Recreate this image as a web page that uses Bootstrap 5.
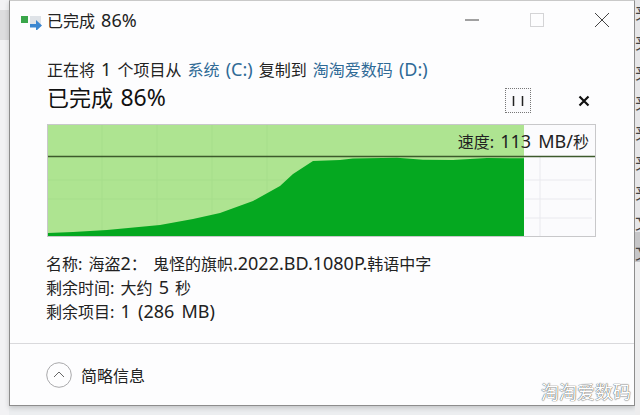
<!DOCTYPE html>
<html lang="zh-CN">
<head>
  <meta charset="UTF-8" />
  <title>已完成 86%</title>
  <link href="https://cdn.jsdelivr.net/npm/bootstrap@5.3.0/dist/css/bootstrap.min.css" rel="stylesheet"/>
  <style>
    html, body { width: 640px; height: 415px; overflow: hidden; }
    body { background: #eceef0; font-family: "Noto Sans CJK SC", "Noto Sans", sans-serif; color: #222; font-size: 16px; line-height: 24px; word-spacing: 2.5px; }
    .desk { height: 415px; }
    .lat { font-family: "Noto Sans", sans-serif; font-size: 18px; }
    .left-strip { width: 9px; background: linear-gradient(#f2f2f4 10px, #dcdcde 10px, #dcdcde 40px, #f2f2f4 40px); }
    .copy-win { width: 626px; height: 406px; background: #fdfdfe; border: 1px solid #8d8d8d; border-top-color: #c9c9c9; box-shadow: 0 2px 5px rgba(0,0,0,.18); }
    .right-strip { width: 5px; overflow: hidden; background: linear-gradient(#e6e6e8 235px, #c6c6c8 235px, #c6c6c8 265px, #ededee 265px); color: #444; line-height: 30px; font-size: 17px; white-space: nowrap; margin-top: -3px; height: 418px; }
    .title-bar { height: 38px; padding-left: 10px; }
    .win-btn { width: 65px; }
    .copy-head { padding: 18px 0 0 37px; height: 85px; }
    .drive { color: #2f6a96; }
    .big-line { font-size: 22px; line-height: 30px; color: #111; margin-top: 0; }
    .big-line .lat { font-size: 23px; }
    .chart-box { width: 549px; height: 113px; margin-left: 37px; position: relative; }
    .chart-box svg { display: block; }
    .speed { position: absolute; right: 7px; top: 5px; line-height: 24px; color: #222; }
    .stats { padding: 14px 0 0 36px; flex: 1; }
    .foot-bar { height: 62px; border-top: 1px solid #d9d9dc; padding-left: 36px; gap: 9px; padding-top: 1px; }
    .mark-text { position: absolute; left: 541px; top: 381px; font-size: 18px; line-height: 20px; color: #fff; text-shadow: 0 0 1px #555, 0 0 1px #555; }
    .pause-btn { width: 26px; height: 25px; border: 1px dotted #777; background: #fbfbfd; }
    .stop-btn { width: 26px; height: 25px; }
    .ctl-row { position: absolute; left: 505px; top: 88px; gap: 40px; }
  </style>
</head>
<body>
  <div class="desk d-flex">
    <div class="left-strip"></div>
    <div class="copy-win d-flex flex-column">
      <div class="title-bar d-flex align-items-center">
        <svg width="27" height="20" viewBox="0 0 27 20">
          <rect x="1" y="6" width="7" height="7" fill="#3aa64a"/>
          <rect x="10" y="6" width="11" height="11" fill="#dfe3e8"/>
          <path d="M10 14h6v-4l6 5.5-6 5.5v-3.500h-6z" fill="#3b86d0"/>
        </svg>
        <span>已完成 <span class="lat">86%</span></span>
        <div class="ms-auto d-flex align-items-center">
          <div class="win-btn d-flex justify-content-center">
            <svg width="16" height="16"><path d="M1 8h14" stroke="#444" stroke-width="1"/></svg>
          </div>
          <div class="win-btn d-flex justify-content-center">
            <svg width="16" height="16"><rect x="1.500" y="1.500" width="13" height="13" fill="none" stroke="#d4d4d6"/></svg>
          </div>
          <div class="win-btn d-flex justify-content-center">
            <svg width="16" height="16"><path d="M1 1l14 14M15 1L1 15" stroke="#444" stroke-width="1"/></svg>
          </div>
        </div>
      </div>
      <div class="copy-head">
        <div>正在将 <span class="lat">1</span> 个项目从 <span class="drive">系统 <span class="lat">(C:)</span></span> 复制到 <span class="drive">淘淘爱数码 <span class="lat">(D:)</span></span></div>
        <div class="big-line">已完成 <span class="lat">86%</span></div>
      </div>
      <div class="chart-box">
        <svg width="549" height="113" viewBox="47 124 549 113">
          <rect x="47.500" y="124.500" width="548" height="112" fill="#fbfbfd" stroke="#c8c8ca"/>
          <path d="M540 157V236M525 180H592M525 199H592M525 218H592" stroke="#e9e9ee" fill="none"/>
          <path d="M48 125V236H524V125z" fill="#aee491"/>
          <path d="M102 125V236M157 125V236M212 125V236M267 125V236M48 180H524M48 199H524" stroke="#a6de8b" fill="none"/>
          <path d="M48 233 L73 232 L107 230 L160 225 L193 219 L220 213 L253 201 L280 186 L293 174 L313 161 L340 160 L353 158.500 L397 157.800 L423 159.700 L453 160 L487 158 L524 158.300 V236 H48 Z" fill="#05a820"/>
          <path d="M48 156.500H595" stroke="#3d5a2c" stroke-width="1.500"/>
        </svg>
        <div class="speed">速度: <span class="lat">113 MB/</span>秒</div>
      </div>
      <div class="stats">
        <div>名称: 海盗<span class="lat">2</span>： 鬼怪的旗帜<span class="lat">.2022.BD.1080P.</span>韩语中字</div>
        <div>剩余时间: 大约 <span class="lat">5</span> 秒</div>
        <div>剩余项目: <span class="lat">1 (286 MB)</span></div>
      </div>
      <div class="foot-bar d-flex align-items-center">
        <svg width="26" height="26" viewBox="0 0 26 26">
          <circle cx="13" cy="13" r="12.300" fill="none" stroke="#a9a9ab"/>
          <path d="M8 15l5-5 5 5" fill="none" stroke="#666"/>
        </svg>
        <span>简略信息</span>
      </div>
    </div>
    <div class="right-strip">夹<br>夹<br>夹<br>夹<br>夹<br>夹<br>夹<br>文<br>文</div>
  </div>
  <div class="ctl-row d-flex">
    <div class="pause-btn d-flex align-items-center justify-content-center">
      <svg width="12" height="12"><path d="M1.500 1v10M10.500 1v10" stroke="#222" stroke-width="1.500"/></svg>
    </div>
    <div class="stop-btn d-flex align-items-center justify-content-center">
      <svg width="12" height="12"><path d="M1.500 1.500l9 9M10.500 1.500l-9 9" stroke="#111" stroke-width="2.200"/></svg>
    </div>
  </div>
  <div class="mark-text">淘淘爱数码</div>
  <script src="https://cdn.jsdelivr.net/npm/bootstrap@5.3.0/dist/js/bootstrap.bundle.min.js"></script>
</body>
</html>
